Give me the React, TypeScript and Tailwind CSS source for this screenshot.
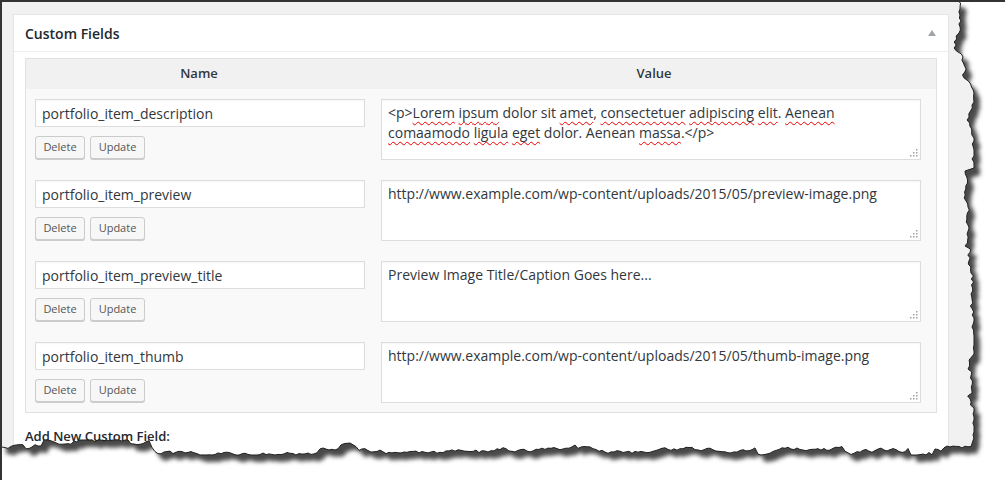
import React from 'react'

const W = 1005
const H = 480

// builds the ragged "torn paper" outline used for the screenshot edge
function tornPath() {
  let s = 11
  const r = () => {
    s = (s * 16807) % 2147483647
    return s / 2147483647
  }
  const pts: [number, number][] = [[0, 0]]
  let x = 959
  for (let y = 0; y <= 440; y += 3) {
    x += (r() - 0.5) * 5
    if (r() < 0.12) x += (r() - 0.5) * 14
    x = Math.max(953, Math.min(974, x))
    pts.push([x, y])
  }
  let y = 446
  for (let xx = Math.round(x) - 3; xx >= 0; xx -= 3) {
    y += (r() - 0.5) * 4
    if (r() < 0.12) y += (r() - 0.5) * 12
    y = Math.max(440, Math.min(455, y))
    pts.push([xx, y])
  }
  pts.push([0, y])
  return 'M' + pts.map((p) => p[0].toFixed(1) + ',' + p[1].toFixed(1)).join('L') + 'Z'
}

const rows = [
  { name: 'portfolio_item_description', value: null },
  { name: 'portfolio_item_preview', value: 'http://www.example.com/wp-content/uploads/2015/05/preview-image.png' },
  { name: 'portfolio_item_preview_title', value: 'Preview Image Title/Caption Goes here...' },
  { name: 'portfolio_item_thumb', value: 'http://www.example.com/wp-content/uploads/2015/05/thumb-image.png' },
]

function Typo({ children }: { children: React.ReactNode }) {
  return (
    <span className="underline decoration-wavy decoration-[#e00] decoration-1 underline-offset-[3px]">
      {children}
    </span>
  )
}

function LoremValue() {
  return (
    <>
      &lt;p&gt;<Typo>Lorem</Typo> <Typo>ipsum</Typo> dolor sit <Typo>amet</Typo>, <Typo>consectetuer</Typo>{' '}
      <Typo>adipiscing</Typo> <Typo>elit</Typo>. <Typo>Aenean</Typo> <Typo>comaamodo</Typo> <Typo>ligula</Typo>{' '}
      <Typo>eget</Typo> dolor. Aenean <Typo>massa</Typo>.&lt;/p&gt;
    </>
  )
}

function Grip() {
  const dots = [
    [6, 0],
    [3, 3],
    [6, 3],
    [0, 6],
    [3, 6],
    [6, 6],
  ]
  return (
    <svg width="8" height="8" className="absolute right-[2px] bottom-[2px]">
      {dots.map(([x, y], i) => (
        <rect key={i} x={x} y={y} width="1.5" height="1.5" fill="#a0a0a0" />
      ))}
    </svg>
  )
}

function Button({ label, w }: { label: string; w: string }) {
  return (
    <button
      className={`${w} h-[23px] rounded-[3px] border border-[#cccccc] bg-[#f7f7f7] text-[11px] text-[#555] shadow-[0_1px_0_#cccccc] flex items-center justify-center`}
    >
      {label}
    </button>
  )
}

export default function App() {
  const d = tornPath()
  return (
    <div
      className="relative w-[1005px] h-[480px] overflow-hidden bg-[#f1f1f1] border-l-2 border-t-2 border-[#333]"
      style={{ fontFamily: '"Open Sans", "Noto Sans", sans-serif' }}
    >
      <div className="ml-[11px] mt-[12px] w-[936px] border border-[#e5e5e5] bg-white">
        {/* Postbox header */}
        <div className="h-[37px] border-b border-[#eeeeee] flex items-center justify-between pl-[11px] pr-[11px]">
          <span className="text-[14px] font-semibold text-[#23282d]">Custom Fields</span>
          <svg width="10" height="8" viewBox="0 0 10 8">
            <path d="M5 1 L9 7 L1 7 Z" fill="#a0a5aa" />
          </svg>
        </div>

        <div className="px-[11px] pt-[6px] pb-[40px]">
          <div className="border border-[#e1e1e1] bg-[#f9f9f9]">
            <div className="grid grid-cols-[346px_1fr] h-[30px] bg-[#f1f1f1] text-[13px] font-semibold text-[#32373c]">
              <div className="flex items-center justify-center">Name</div>
              <div className="flex items-center justify-center">Value</div>
            </div>
            {rows.map((row) => (
              <div key={row.name} className="grid grid-cols-[346px_1fr] pt-[10px] pb-[10px] last:pb-[9px]">
                <div className="pl-[9px]">
                  <div className="w-[330px] h-[28px] border border-[#dddddd] bg-white flex items-center px-[6px] text-[14px] text-[#32373c] shadow-[inset_0_1px_2px_rgba(0,0,0,0.04)]">
                    {row.name}
                  </div>
                  <div className="flex gap-[5px] mt-[9px]">
                    <Button label="Delete" w="w-[50px]" />
                    <Button label="Update" w="w-[55px]" />
                  </div>
                </div>
                <div className="pl-[9px]">
                  <div className="relative w-[540px] h-[61px] border border-[#dddddd] bg-white px-[6px] pt-[3px] text-[14px] leading-[20px] text-[#32373c] shadow-[inset_0_1px_2px_rgba(0,0,0,0.04)]">
                    {row.value ?? <LoremValue />}
                    <Grip />
                  </div>
                </div>
              </div>
            ))}
          </div>
          <div className="mt-[14px] text-[13px] font-semibold text-[#23282d]">Add New Custom Field:</div>
        </div>
      </div>

      {/* torn screenshot edge */}
      <svg className="absolute left-[-2px] top-[-2px] pointer-events-none" width={W} height={H}>
        <defs>
          <filter id="tornBlur" x="-5%" y="-5%" width="110%" height="110%">
            <feGaussianBlur stdDeviation="2.2" />
          </filter>
          <mask id="outside">
            <rect width={W} height={H} fill="white" />
            <path d={d} fill="black" />
          </mask>
        </defs>
        <g mask="url(#outside)">
          <rect width={W} height={H} fill="white" />
          <path d={d} transform="translate(6,7)" fill="#4a4a4a" filter="url(#tornBlur)" />
        </g>
        <path d={d} fill="none" stroke="#222" strokeWidth="1" />
      </svg>
    </div>
  )
}
